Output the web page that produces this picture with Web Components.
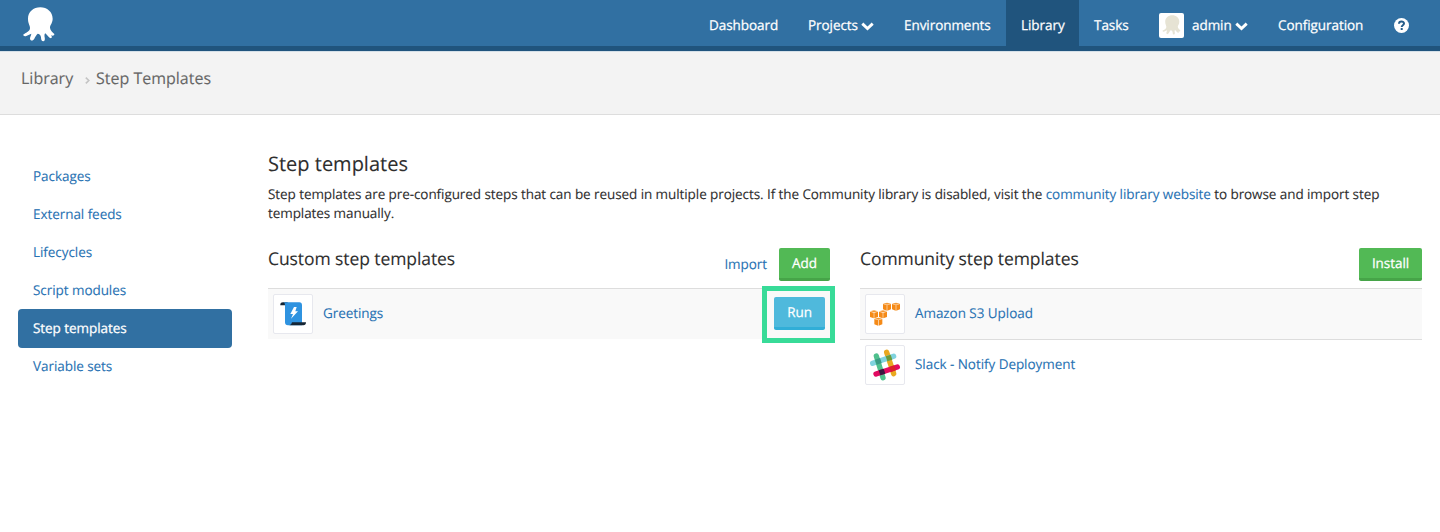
<!DOCTYPE html>
<html lang="en">
<head>
<meta charset="utf-8">
<title>Step Templates</title>
<style>
body{margin:0;background:#fff;color:#2e2e2e;font:13.5px/19px "Open Sans",sans-serif;letter-spacing:-.06px;text-rendering:geometricPrecision;-webkit-text-stroke:.1px}
</style>
</head>
<body>
<octo-app></octo-app>
<script>
function define(name, html){
  const t=document.createElement('template');
  t.innerHTML='<style>*{box-sizing:border-box}:host{box-sizing:border-box}a{color:inherit;text-decoration:none}svg{display:block}</style>'+html;
  customElements.define(name, class extends HTMLElement{
    constructor(){super();this.attachShadow({mode:'open'}).append(t.content.cloneNode(true));}
  });
}

define('octo-logo',`<style>:host{display:block;width:32px;height:35px}svg{width:100%;height:100%}</style>
<svg viewBox="23 20 96 105"><path fill="currentColor" d="M75 21C54 21 38 35 38 55C38 70 44 74 44 83C44 93 32 97 25 102C22 105 26 110 33 107C39 104 44 102 48 100C47 108 42 112 45 118C49 123 54 120 57 115C60 109 63 103 67 100C72 100 76 104 77 111C77 119 79 123 84 123C89 122 89 117 88 111C87 105 87 101 90 99C95 103 99 110 104 113C109 115 112 110 107 105C112 108 118 106 117 101C112 95 104 90 104 82C104 74 112 68 112 55C112 35 95 21 75 21Z"/></svg>`);

define('chevron-down',`<style>:host{display:block;width:13px;height:9px;margin:2px 0 0 3px}</style>
<svg width="13" height="9" viewBox="0 0 13 9"><path d="M1.300 1.600L6.500 6.500L11.700 1.600" fill="none" stroke="#fff" stroke-width="2.900"/></svg>`);

define('nav-item',`<style>
:host{display:flex;align-items:center;height:51px;padding:0 0 1px 15px;color:#fff;white-space:nowrap;-webkit-text-stroke:.25px}
:host([active]){background:#20547d}
</style><slot></slot>`);

define('user-avatar',`<style>:host{display:flex;width:25px;height:25px;background:#fff;border-radius:2px;justify-content:center;align-items:center;color:#e6e3d4;margin-right:8px}octo-logo{width:19px;height:20px}</style><octo-logo></octo-logo>`);

define('top-bar',`<style>
:host{display:flex;justify-content:space-between;height:51px;background:linear-gradient(#3170a2 46px,#20547d 46px);padding:0 16px 0 23px}
.logo{color:#fff;margin-top:7px}
nav{display:flex}
</style>
<octo-logo class="logo"></octo-logo>
<nav>
<nav-item style="width:99px">Dashboard</nav-item>
<nav-item style="width:96px">Projects<chevron-down></chevron-down></nav-item>
<nav-item style="width:117px">Environments</nav-item>
<nav-item active style="width:73px">Library</nav-item>
<nav-item style="width:65px">Tasks</nav-item>
<nav-item style="width:119px"><user-avatar></user-avatar>admin<chevron-down></chevron-down></nav-item>
<nav-item style="width:116px">Configuration</nav-item>
<nav-item style="width:45px"><svg width="15" height="15" viewBox="0 0 15 15"><circle cx="7.5" cy="7.5" r="7.5" fill="#fff"/><path d="M5 5.8C5 2.6 10 2.7 10 5.6C10 7.3 7.7 7.2 7.7 9" fill="none" stroke="#265d8a" stroke-width="2"/><rect x="6.700" y="10" width="2" height="2" fill="#265d8a"/></svg></nav-item>
</nav>`);

define('bread-crumbs',`<style>
:host{display:flex;height:64px;background:#f3f3f3;border-top:1px solid #d5e0e8;border-bottom:1px solid #ddd;padding:15px 0 0 21px;font-size:16px;line-height:23px;color:#666;letter-spacing:0}
svg{margin:10px 6px 0 11px}
</style><span style="width:53px">Library</span><svg width="5" height="7" viewBox="0 0 5 7"><path d="M.8.6L3.8 3.5L.8 6.4" fill="none" stroke="#c4c4c4" stroke-width="1.6"/></svg><span>Step Templates</span>`);

define('side-item',`<style>
:host{display:block;height:38px;padding:9px 15px;color:#2872b3;border-radius:4px}
:host([active]){background:#3170a2;color:#fff;height:39px;margin:-1px 0 0;padding-top:10px;-webkit-text-stroke:.25px}
</style><a><slot></slot></a>`);

define('side-nav',`<style>:host{display:block;width:214px;padding-top:43px}</style>
<side-item>Packages</side-item><side-item>External feeds</side-item><side-item>Lifecycles</side-item><side-item>Script modules</side-item><side-item active>Step templates</side-item><side-item>Variable sets</side-item>`);

define('push-button',`<style>
:host{display:block;height:33px;line-height:31px;text-align:center;border-radius:2px;color:#fff;background:#52b955;border-bottom:3px solid #46a448;-webkit-text-stroke:.25px}
:host([tone=info]){background:#4fb9dc;border-bottom-color:#31aed7}
</style><slot></slot>`);

define('template-row',`<style>
:host{display:flex;align-items:center;height:51px;border-top:1px solid #ddd;padding:0 5px;color:#2872b3;position:relative}
:host([odd]){background:#f9f9f9}
.tile{width:40px;height:40px;border:1px solid #e7e8ee;background:#fff;border-radius:2px;margin-right:10px}
a{flex:1;padding-bottom:2px}
</style><div class="tile"><slot name="icon"></slot></div><a><slot></slot></a><slot name="action"></slot>`);

define('template-panel',`<style>
:host{display:block;width:562px}
header{display:flex;height:40px;align-items:flex-start}
h3{flex:1;margin:0;font-weight:400;font-size:17.5px;line-height:22px;letter-spacing:-.08px}
</style><header><h3><slot name="title"></slot></h3><slot name="tools"></slot></header><slot></slot>`);

define('script-icon',`<style>:host{display:block;margin:-1px}</style><svg width="40" height="40" viewBox="0 0 120 120"><path d="M22 34Q21 25 30 25H44V34Z" fill="#152534"/><path d="M32 25H79Q87 25 87 34V94H45Q36 94 36 85V34Q36 27 32 25Z" fill="#2f93e0"/><path d="M57 85H99Q99 94 91 94H49Q56 92 57 85Z" fill="#152534"/><path d="M63 39L71 39L67 52H75L54 74L60 60H52Z" fill="#fff"/></svg>`);

define('aws-icon',`<style>:host{display:block;margin:-1px}</style><svg width="40" height="40" viewBox="0 0 120 120"><defs><g id="c"><path d="M-12-8L-.8-5V12L-12 8Z" fill="#f58a17"/><path d="M12-8L.8-5V12L12 8Z" fill="#f58a17"/><path d="M-12-9L0-12L12-9L0-6Z" fill="#f69a35"/></g></defs><use href="#c" x="66" y="38"/><use href="#c" x="93" y="38"/><use href="#c" x="27" y="61"/><use href="#c" x="54" y="61"/><use href="#c" x="40" y="83"/></svg>`);

define('slack-icon',`<style>:host{display:block;margin:-1px}</style><svg width="40" height="40" viewBox="0 0 120 120" fill="none" stroke-width="16" stroke-linecap="round"><path d="M65 22L86 86" stroke="#e9a820"/><path d="M23 55L86 34" stroke="#80d3df"/><path d="M34 33L54 98" stroke="#4fc08d"/><path d="M33 87L97 66" stroke="#e20a61"/><g stroke="none"><path d="M30 44L45 39L50 54L35 59Z" fill="#399a85"/><path d="M62 34L77 29L82 44L67 49Z" fill="#6b9a3a"/><path d="M41 76L56 71L61 86L46 91Z" fill="#3c1740"/><path d="M73 66L88 61L93 76L78 81Z" fill="#dc2027"/></g></svg>`);

define('octo-app',`<style>
:host{display:block}
main{display:flex;padding:0 18px}
section{margin-left:36px;width:1154px}
h2{margin:37px 0 0;font-weight:400;font-size:20px;line-height:24px;letter-spacing:0}
p{margin:9px 0 25px;white-space:nowrap;letter-spacing:-.078px}
.link,.imp{color:#2872b3}
.imp{margin:7px 12px 0 0}
.cols{display:flex;justify-content:space-between}
.hl{width:73px;height:57px;border:5px solid #38db98;padding:6px 7px;margin-right:-10px;position:relative}
</style>
<top-bar></top-bar><bread-crumbs></bread-crumbs>
<main><side-nav></side-nav><section>
<h2>Step templates</h2>
<p>Step templates are pre-configured steps that can be reused in multiple projects. If the Community library is disabled, visit the <a class="link">community library website</a> to browse and import step<br>templates manually.</p>
<div class="cols">
<template-panel><span slot="title">Custom step templates</span><a slot="tools" class="imp">Import</a><push-button slot="tools" style="width:51px">Add</push-button>
<template-row odd><script-icon slot="icon"></script-icon>Greetings<div slot="action" class="hl"><push-button tone="info" style="width:51px">Run</push-button></div></template-row></template-panel>
<template-panel><span slot="title">Community step templates</span><push-button slot="tools" style="width:63px">Install</push-button>
<template-row odd><aws-icon slot="icon"></aws-icon>Amazon S3 Upload</template-row>
<template-row><slack-icon slot="icon"></slack-icon>Slack - Notify Deployment</template-row></template-panel>
</div></section></main>`);
</script>
</body>
</html>
